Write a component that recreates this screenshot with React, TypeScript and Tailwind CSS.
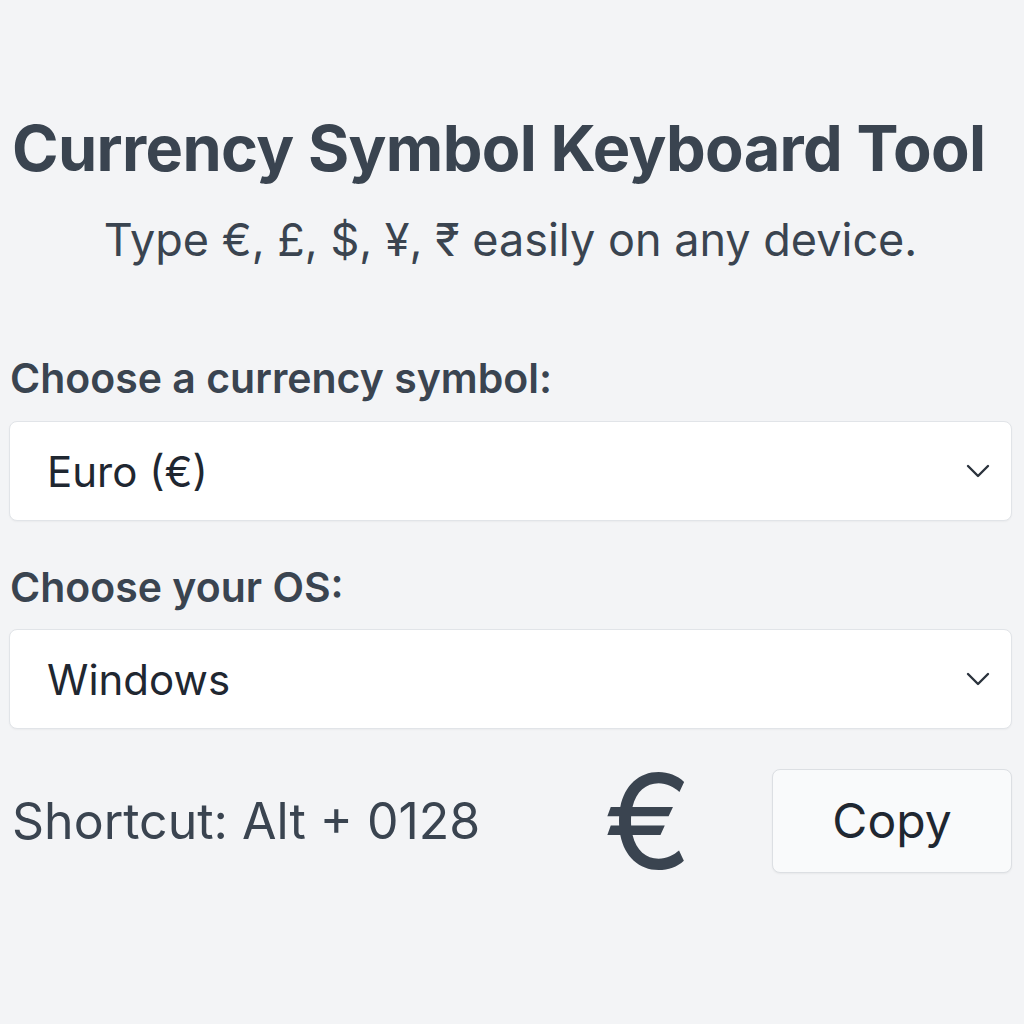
function Chevron() {
  return (
    <svg width="24" height="14" viewBox="0 0 24 14" fill="none" className="text-[#2b333d]">
      <polyline points="2,2 12,12 22,2" stroke="currentColor" strokeWidth="2.4" strokeLinecap="round" strokeLinejoin="round" />
    </svg>
  );
}

function SelectBox({ value }: { value: string }) {
  return (
    <div className="flex h-[100px] items-center justify-between rounded-lg border border-[#e1e4e8] bg-white pl-[37px] pr-[21px] shadow-[0_1px_2px_rgba(0,0,0,0.04)]">
      <span className="text-[42px] text-[#1f2731]">{value}</span>
      <Chevron />
    </div>
  );
}

export default function App() {
  return (
    <div className="min-h-screen bg-[#f3f4f6] font-['Inter',sans-serif] text-[#3a4450]">
      <div className="pl-[9px] pr-[12px] pt-[104px]">
        <h1 className="pl-[3px] text-[63px] font-bold leading-[88px] tracking-[-0.01em]">
          Currency Symbol Keyboard Tool
        </h1>
        <p className="mt-[18px] text-center text-[45px] leading-[60px]">
          Type €, £, $, ¥, ₹ easily on any device.
        </p>

        <label className="mt-[80px] block pl-[1px] text-[41px] font-semibold leading-[56px]">
          Choose a currency symbol:
        </label>
        <div className="mt-[15px]">
          <SelectBox value="Euro (€)" />
        </div>

        <label className="mt-[38px] block pl-[1px] text-[41px] font-semibold leading-[56px]">
          Choose your OS:
        </label>
        <div className="mt-[14px]">
          <SelectBox value="Windows" />
        </div>

        <div className="mt-[26px] flex items-center">
          <span className="pl-[3px] text-[50px]">Shortcut: Alt + 0128</span>
          <span className="ml-auto mr-[80px] text-[132px] font-normal leading-none">€</span>
          <button className="h-[104px] w-[240px] rounded-lg border border-[#dcdfe3] bg-[#f9fafb] text-[48px] text-[#1f2731] shadow-[0_1px_2px_rgba(0,0,0,0.05)]">
            Copy
          </button>
        </div>
      </div>
    </div>
  );
}
